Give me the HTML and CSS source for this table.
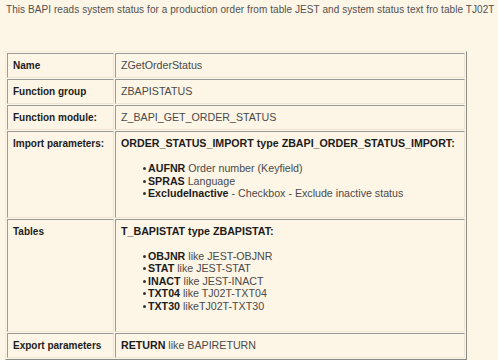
FILE: index.html
```html
<!DOCTYPE html>
<html>
<head>
<meta charset="utf-8">
<link rel="stylesheet" href="styles.css">
</head>
<body>
<p class="intro">This BAPI reads system status for a production order from table JEST and system status text fro table TJ02T</p>
<table class="spec">
  <tr>
    <th>Name</th>
    <td>ZGetOrderStatus</td>
  </tr>
  <tr>
    <th>Function group</th>
    <td>ZBAPISTATUS</td>
  </tr>
  <tr>
    <th>Function module:</th>
    <td>Z_BAPI_GET_ORDER_STATUS</td>
  </tr>
  <tr>
    <th>Import parameters:</th>
    <td>
      <div class="head">ORDER_STATUS_IMPORT type ZBAPI_ORDER_STATUS_IMPORT:</div>
      <ul class="items items-import">
        <li><b>AUFNR</b> Order number (Keyfield)</li>
        <li><b>SPRAS</b> Language</li>
        <li><b>ExcludeInactive</b> - Checkbox - Exclude inactive status</li>
      </ul>
    </td>
  </tr>
  <tr>
    <th>Tables</th>
    <td>
      <div class="head">T_BAPISTAT type ZBAPISTAT:</div>
      <ul class="items items-tables">
        <li><b>OBJNR</b> like JEST-OBJNR</li>
        <li><b>STAT</b> like JEST-STAT</li>
        <li><b>INACT</b> like JEST-INACT</li>
        <li><b>TXT04</b> like TJ02T-TXT04</li>
        <li><b>TXT30</b> likeTJ02T-TXT30</li>
      </ul>
    </td>
  </tr>
  <tr>
    <th>Export parameters</th>
    <td><b>RETURN</b> like BAPIRETURN</td>
  </tr>
</table>
</body>
</html>
```

FILE: styles.css
```css
html, body {
  margin: 0;
  padding: 0;
  background: #fdf5e6;
}
body {
  font-family: "Liberation Sans", Arial, sans-serif;
  font-size: 10.67px;
  color: #4a4a4a;
  padding: 3px 5px 0 5px;
}
.intro {
  margin: 0 0 0 1px;
  font-size: 10px;
  letter-spacing: 0.07px;
  line-height: 13px;
  white-space: nowrap;
  color: #505050;
}
.spec {
  margin-top: 35px;
  width: 462px;
  border-collapse: separate;
  border-spacing: 1px;
  border: 1px solid;
  border-color: #f4ecdc #8a8a86 #8a8a86 #f4ecdc;
}
.spec th, .spec td {
  border: 1px solid;
  border-color: #9a9a96 #ece4d4 #ece4d4 #9a9a96;
  padding: 5px;
  line-height: 13px;
  text-align: left;
  vertical-align: top;
}
.spec th {
  width: 95px;
  font-size: 10px;
  font-weight: bold;
  white-space: nowrap;
  color: #1c1c1c;
}
b, .head {
  font-weight: bold;
  color: #1c1c1c;
}
.items {
  list-style: none;
  margin: 12px 0 12px 0;
  padding-left: 22px;
}
.items-tables {
  margin-bottom: 14px;
}
.items li {
  line-height: 12.5px;
}
.items li::before {
  content: "";
  display: inline-block;
  width: 3px;
  height: 3px;
  border-radius: 50%;
  background: #333;
  margin-right: 2px;
  vertical-align: 2px;
}
```
